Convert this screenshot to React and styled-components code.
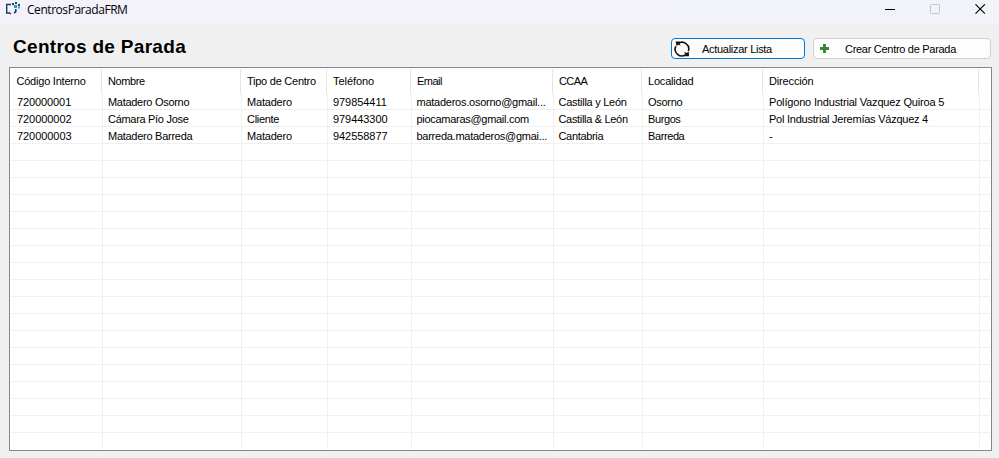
import React from "react";
import styled, { createGlobalStyle } from "styled-components";

const Global = createGlobalStyle`
  html, body { margin: 0; padding: 0; }
  body { background: #f0f0f0; overflow: hidden; }
  * { box-sizing: border-box; }
`;

const Window = styled.div`
  width: 999px;
  height: 458px;
  display: flex;
  flex-direction: column;
  background: #f0f0f0;
  color: #000;
  font: 11px "Liberation Sans", Arial, sans-serif;
`;

const TitleBar = styled.header`
  flex: none;
  height: 25px;
  display: flex;
  align-items: flex-start;
  padding: 0 13px 0 5px;
  background: linear-gradient(90deg, #f3f1f9, #f1f3f8);
`;

const AppIcon = styled.svg`
  flex: none;
  width: 16px;
  height: 16px;
`;

const Caption = styled.span`
  flex: 1;
  margin-left: 6px;
  font: 12px/19px "Open Sans", "Noto Sans", sans-serif;
  letter-spacing: -0.45px;
`;

const WindowControls = styled.div`
  display: flex;
  gap: 34px;
  padding-top: 4px;
`;

const WindowButton = styled.button`
  width: 11px;
  height: 11px;
  padding: 0;
  border: 0;
  background: none;
  color: ${(p) => (p.disabled ? "#c6c7cb" : "#000")};
  svg { display: block; }
`;

const Toolbar = styled.div`
  flex: none;
  height: 42px;
  display: flex;
  align-items: flex-start;
  padding: 13px 8px 0 13px;
  gap: 8px;
`;

const Heading = styled.h1`
  flex: 1;
  margin: -3px 0 0;
  font: bold 19px/24px "Liberation Sans", Arial, sans-serif;
  letter-spacing: 0.3px;
`;

const ActionButton = styled.button`
  width: ${(p) => p.$width}px;
  height: 21px;
  display: flex;
  align-items: center;
  padding: 0 0 0 2px;
  border: 1px solid ${(p) => (p.$focused ? "#0078d4" : "#d0d0d0")};
  border-radius: 4px;
  background: #fdfdfd;
  color: #000;
  font: 11px/19px "Liberation Sans", Arial, sans-serif;
  letter-spacing: -0.29px;
  svg { flex: none; }
`;

const ButtonLabel = styled.span`
  margin-left: ${(p) => p.$gap}px;
  padding-top: 2px;
  white-space: nowrap;
`;

const ListView = styled.div`
  width: 983px;
  height: 384px;
  margin-left: 9px;
  padding: 1px;
  border: 1px solid #828790;
  background: #fff;
`;

const HeaderRow = styled.div`
  display: grid;
  grid-template-columns: 91px 139px 86px 84px 142px 89px 121px 216px 11px;
  height: 24px;
`;

const HeaderCell = styled.div`
  border-right: 1px solid #e5e5e5;
  padding-left: 6px;
  line-height: 25px;
  white-space: nowrap;
  letter-spacing: ${(p) => p.$tracking}px;
  &:first-child { padding-left: 5.5px; }
  &:last-child { border-right: 0; }
`;

const Body = styled.div`
  height: 356px;
  overflow: hidden;
  display: grid;
  grid-auto-rows: 17px;
`;

const Row = styled.div`
  display: grid;
  grid-template-columns: 92px 139px 86px 84px 142px 89px 121px 216px 10px;
`;

const Cell = styled.div`
  border-right: 1px solid #f0f0f0;
  border-bottom: 1px solid #f0f0f0;
  padding-left: 5px;
  line-height: 18px;
  white-space: nowrap;
  overflow: hidden;
  letter-spacing: ${(p) => p.$tracking}px;
  &:first-child { padding-left: 6px; }
  &:last-child { border-right: 0; }
  &:nth-child(5), &:nth-child(6) { padding-left: 4.5px; }
`;

/* Each entry is [text, letter spacing in px]. */
const headers = [
  ["Código Interno", -0.22], ["Nombre", -0.4], ["Tipo de Centro", -0.25], ["Teléfono", -0.05],
  ["Email", -0.5], ["CCAA", -0.6], ["Localidad", -0.2], ["Dirección", -0.15], ["", 0],
];

const rows = [
  [["720000001", -0.1], ["Matadero Osorno", -0.29], ["Matadero", -0.2], ["979854411", -0.06], ["mataderos.osorno@gmail...", -0.25], ["Castilla y León", -0.27], ["Osorno", -0.3], ["Polígono Industrial Vazquez Quiroa 5", -0.17], ["", 0]],
  [["720000002", -0.06], ["Cámara Pío Jose", -0.3], ["Cliente", -0.3], ["979443300", -0.06], ["piocamaras@gmail.com", -0.29], ["Castilla & León", -0.32], ["Burgos", -0.4], ["Pol Industrial Jeremías Vázquez 4", -0.24], ["", 0]],
  [["720000003", -0.06], ["Matadero Barreda", -0.27], ["Matadero", -0.2], ["942558877", -0.06], ["barreda.mataderos@gmai...", -0.26], ["Cantabria", -0.33], ["Barreda", -0.4], ["-", 0], ["", 0]],
];

const blankRows = Array.from({ length: 18 }, () => headers.map(() => ["", 0]));

const BracketLogo = () => (
  <AppIcon viewBox="0 0 16 16">
    <path d="M6 4.5H1.7V13H4.5L6 14" fill="none" stroke="#1b3a5e" strokeWidth="1.4" />
    <path d="M9 13L10.8 11.7V9" fill="none" stroke="#1b3a5e" strokeWidth="1.6" />
    <path d="M7 3h2v2H7zM10 2h2v2h-2zM13 4h2v2h-2z" fill="#17496f" />
    <path d="M9 5h3v3H9zM13 6.5h2v2h-2z" fill="#259bc8" />
  </AppIcon>
);

const RefreshIcon = () => (
  <svg width="17" height="17" viewBox="0 0 17 17">
    <g fill="none" stroke="#111" strokeWidth="1.6">
      <path d="M4.2 3.6A6.6 6.6 0 0 1 14.4 11" />
      <path d="M11.6 14.6A6.6 6.6 0 0 1 1.8 6.4" />
    </g>
    <path d="M1.6 1.5H6.4L5.4 2.8L6.6 5.8L4.4 4.6L2.6 6.2Z" fill="#111" />
    <path d="M15 16.2H10.2L11.4 14.8L10.2 11.8L12.6 13L14.8 11.4Z" fill="#111" />
  </svg>
);

const PlusIcon = () => (
  <svg width="17" height="17" viewBox="0 0 17 17" shapeRendering="crispEdges">
    <path d="M7 4h3v3h3v3h-3v3H7v-3H4V7h3z" fill="#388a35" />
  </svg>
);

export default function App() {
  return (
    <Window>
      <Global />
      <TitleBar>
        <BracketLogo />
        <Caption>CentrosParadaFRM</Caption>
        <WindowControls>
          <WindowButton aria-label="Minimizar">
            <svg width="11" height="11"><path d="M0 5.5H10" stroke="currentColor" /></svg>
          </WindowButton>
          <WindowButton aria-label="Maximizar" disabled>
            <svg width="11" height="11"><rect x=".5" y=".5" width="9" height="9" rx=".8" fill="none" stroke="currentColor" /></svg>
          </WindowButton>
          <WindowButton aria-label="Cerrar">
            <svg width="11" height="11"><path d="M.5 .3L9.9 9.7M9.9 .3L.5 9.7" stroke="currentColor" strokeWidth="1.1" /></svg>
          </WindowButton>
        </WindowControls>
      </TitleBar>
      <Toolbar>
        <Heading>Centros de Parada</Heading>
        <ActionButton $width={134} $focused>
          <RefreshIcon />
          <ButtonLabel $gap={11}>Actualizar Lista</ButtonLabel>
        </ActionButton>
        <ActionButton $width={178}>
          <PlusIcon />
          <ButtonLabel $gap={12}>Crear Centro de Parada</ButtonLabel>
        </ActionButton>
      </Toolbar>
      <ListView>
        <HeaderRow>
          {headers.map(([text, tracking], i) => (
            <HeaderCell key={i} $tracking={tracking}>{text}</HeaderCell>
          ))}
        </HeaderRow>
        <Body>
          {[...rows, ...blankRows].map((row, r) => (
            <Row key={r}>
              {row.map(([text, tracking], i) => (
                <Cell key={i} $tracking={tracking}>{text}</Cell>
              ))}
            </Row>
          ))}
        </Body>
      </ListView>
    </Window>
  );
}
